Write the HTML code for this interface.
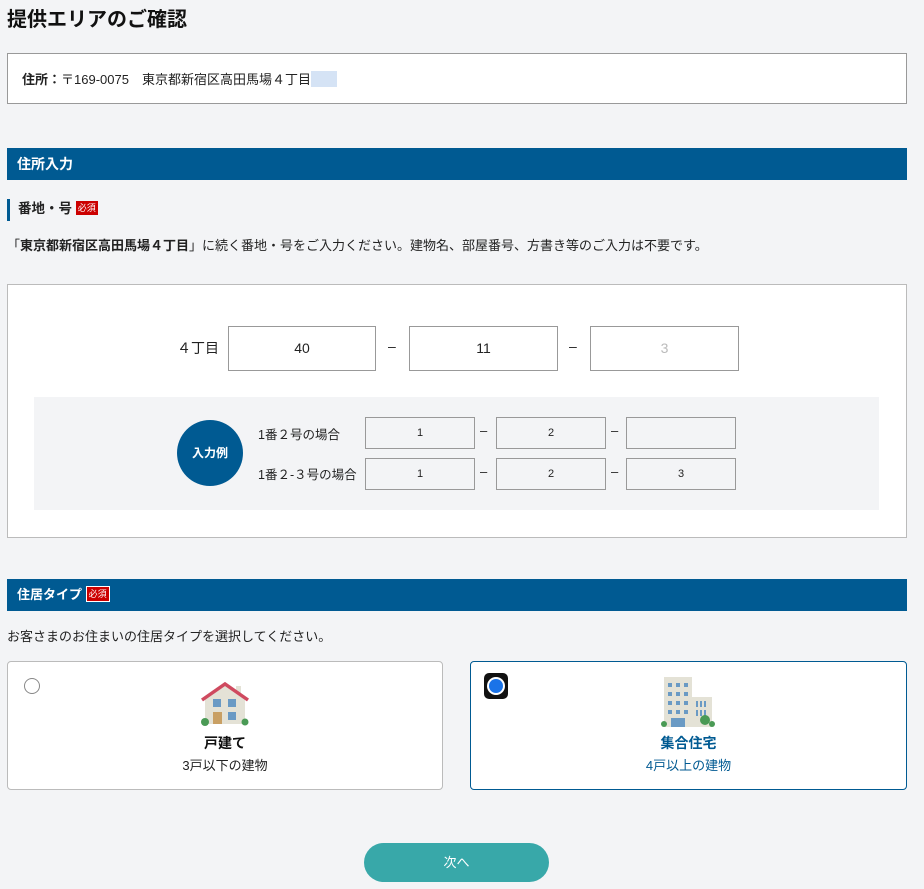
<!DOCTYPE html>
<html><head><meta charset="utf-8"><style>
*{box-sizing:border-box;margin:0;padding:0}
body{width:924px;height:889px;background:#f3f4f6;font-family:"Liberation Sans","Noto Sans CJK JP",sans-serif;color:#222;position:relative;overflow:hidden}
.a{position:absolute}
.hdr{position:absolute;left:7px;width:900px;height:32px;background:#005a92;color:#fff;font-weight:bold;font-size:14px;line-height:32px;padding-left:10px}
.req{display:inline-block;background:#c00;color:#fff;font-size:9px;line-height:14px;padding:0 2px;vertical-align:2px;border:1px solid #fff;font-weight:normal}
.in{position:absolute;background:#fff;border:1px solid #999;text-align:center;font-size:14px}
.sm{position:absolute;background:#f3f4f6;border:1px solid #999;text-align:center;font-size:11px;height:32px;line-height:30px;width:110px}
.d{position:absolute;font-size:13px}
</style></head><body>
<div class="a" style="left:7px;top:3px;font-size:20px;font-weight:bold;color:#111">提供エリアのご確認</div>
<div class="a" style="left:7px;top:53px;width:900px;height:51px;background:#fff;border:1px solid #999;font-size:13px;padding:15px 0 0 14px"><b>住所：</b>〒169-0075　東京都新宿区高田馬場４丁目<span style="display:inline-block;width:26px;height:16px;background:#d5e3f5;vertical-align:-3px"></span></div>
<div class="hdr" style="top:148px">住所入力</div>
<div class="a" style="left:7px;top:199px;height:22px;border-left:3px solid #005a92;padding-left:8px;font-size:13.5px;font-weight:bold;line-height:20px">番地・号 <span class="req" style="border:none">必須</span></div>
<div class="a" style="left:7px;top:235px;font-size:13px">「<b>東京都新宿区高田馬場４丁目</b>」に続く番地・号をご入力ください。建物名、部屋番号、方書き等のご入力は不要です。</div>
<div class="a" style="left:7px;top:284px;width:900px;height:254px;background:#fff;border:1px solid #bbb"></div>
<div class="a" style="left:177px;top:338px;font-size:14px">４丁目</div>
<div class="in" style="left:228px;top:326px;width:148px;height:45px;line-height:43px">40</div>
<div class="a" style="left:388px;top:338px;font-size:14px">–</div>
<div class="in" style="left:409px;top:326px;width:149px;height:45px;line-height:43px">11</div>
<div class="a" style="left:569px;top:338px;font-size:14px">–</div>
<div class="in" style="left:590px;top:326px;width:149px;height:45px;line-height:43px;color:#bbb">3</div>
<div class="a" style="left:34px;top:397px;width:845px;height:113px;background:#f3f4f6"></div>
<div class="a" style="left:177px;top:420px;width:66px;height:66px;border-radius:50%;background:#005a92;color:#fff;font-weight:bold;font-size:12px;text-align:center;line-height:66px">入力例</div>
<div class="a" style="left:258px;top:424px;font-size:12.5px">1番２号の場合</div>
<div class="a" style="left:258px;top:464px;font-size:12.5px">1番２-３号の場合</div>
<div class="sm" style="left:365px;top:417px">1</div><div class="d" style="left:480px;top:423px">–</div>
<div class="sm" style="left:496px;top:417px">2</div><div class="d" style="left:611px;top:423px">–</div>
<div class="sm" style="left:626px;top:417px"></div>
<div class="sm" style="left:365px;top:458px">1</div><div class="d" style="left:480px;top:464px">–</div>
<div class="sm" style="left:496px;top:458px">2</div><div class="d" style="left:611px;top:464px">–</div>
<div class="sm" style="left:626px;top:458px">3</div>
<div class="hdr" style="top:579px;font-size:13px">住居タイプ <span class="req">必須</span></div>
<div class="a" style="left:7px;top:626px;font-size:13px">お客さまのお住まいの住居タイプを選択してください。</div>
<div class="a" style="left:7px;top:661px;width:436px;height:129px;background:#fff;border:1px solid #bbb;border-radius:4px"></div>
<div class="a" style="left:24px;top:678px;width:16px;height:16px;border:1.5px solid #888;border-radius:50%"></div>
<svg class="a" style="left:200px;top:682px" width="50" height="44" viewBox="0 0 50 44">
<rect x="36" y="4" width="5" height="10" fill="#e4e2d6"/>
<polygon points="25,3 5,17 5,42 45,42 45,17" fill="#e4e2d6"/>
<polyline points="2,18 25,2 48,18" fill="none" stroke="#cf4a5f" stroke-width="3.5"/>
<rect x="13" y="17" width="8" height="8" fill="#6a9ac4"/><rect x="28" y="17" width="8" height="8" fill="#6a9ac4"/>
<rect x="28" y="30" width="8" height="8" fill="#6a9ac4"/><rect x="13" y="30" width="9" height="12" fill="#c9a064"/>
<circle cx="5" cy="40" r="4" fill="#4a9a55"/><circle cx="45" cy="40" r="3.5" fill="#4a9a55"/>
</svg>
<div class="a" style="left:7px;top:733px;width:436px;text-align:center;font-size:14px;font-weight:bold;color:#111">戸建て</div>
<div class="a" style="left:7px;top:755px;width:436px;text-align:center;font-size:13px">3戸以下の建物</div>
<div class="a" style="left:470px;top:661px;width:437px;height:129px;background:#fff;border:1px solid #005a92;border-radius:4px"></div>
<div class="a" style="left:484px;top:673px;width:24px;height:26px;background:#111;border-radius:5px"><div class="a" style="left:3px;top:4px;width:18px;height:18px;border-radius:50%;background:#fff"></div><div class="a" style="left:5px;top:6px;width:14px;height:14px;border-radius:50%;background:#1a73e8"></div></div>
<svg class="a" style="left:660px;top:676px" width="56" height="52" viewBox="0 0 56 52">
<rect x="4" y="1" width="28" height="50" fill="#e4e2d6"/><rect x="32" y="21" width="20" height="30" fill="#e4e2d6"/>
<g fill="#6a9ac4"><rect x="8" y="7" width="4" height="4"/><rect x="16" y="7" width="4" height="4"/><rect x="24" y="7" width="4" height="4"/>
<rect x="8" y="16" width="4" height="4"/><rect x="16" y="16" width="4" height="4"/><rect x="24" y="16" width="4" height="4"/>
<rect x="8" y="25" width="4" height="4"/><rect x="16" y="25" width="4" height="4"/><rect x="24" y="25" width="4" height="4"/>
<rect x="8" y="34" width="4" height="4"/><rect x="16" y="34" width="4" height="4"/><rect x="24" y="34" width="4" height="4"/>
<rect x="36" y="25" width="2" height="6"/><rect x="40" y="25" width="2" height="6"/><rect x="44" y="25" width="2" height="6"/>
<rect x="36" y="34" width="2" height="6"/><rect x="40" y="34" width="2" height="6"/><rect x="44" y="34" width="2" height="6"/>
<rect x="11" y="42" width="14" height="9"/></g>
<circle cx="45" cy="44" r="5" fill="#4a9a55"/><circle cx="4" cy="48" r="3" fill="#4a9a55"/><circle cx="52" cy="48" r="3" fill="#4a9a55"/>
</svg>
<div class="a" style="left:470px;top:733px;width:437px;text-align:center;font-size:14px;font-weight:bold;color:#005a92">集合住宅</div>
<div class="a" style="left:470px;top:755px;width:437px;text-align:center;font-size:13px;color:#005a92">4戸以上の建物</div>
<div class="a" style="left:364px;top:843px;width:185px;height:39px;border-radius:20px;background:#38a8a9;color:#fff;text-align:center;line-height:39px;font-size:13px">次へ</div>
</body></html>
